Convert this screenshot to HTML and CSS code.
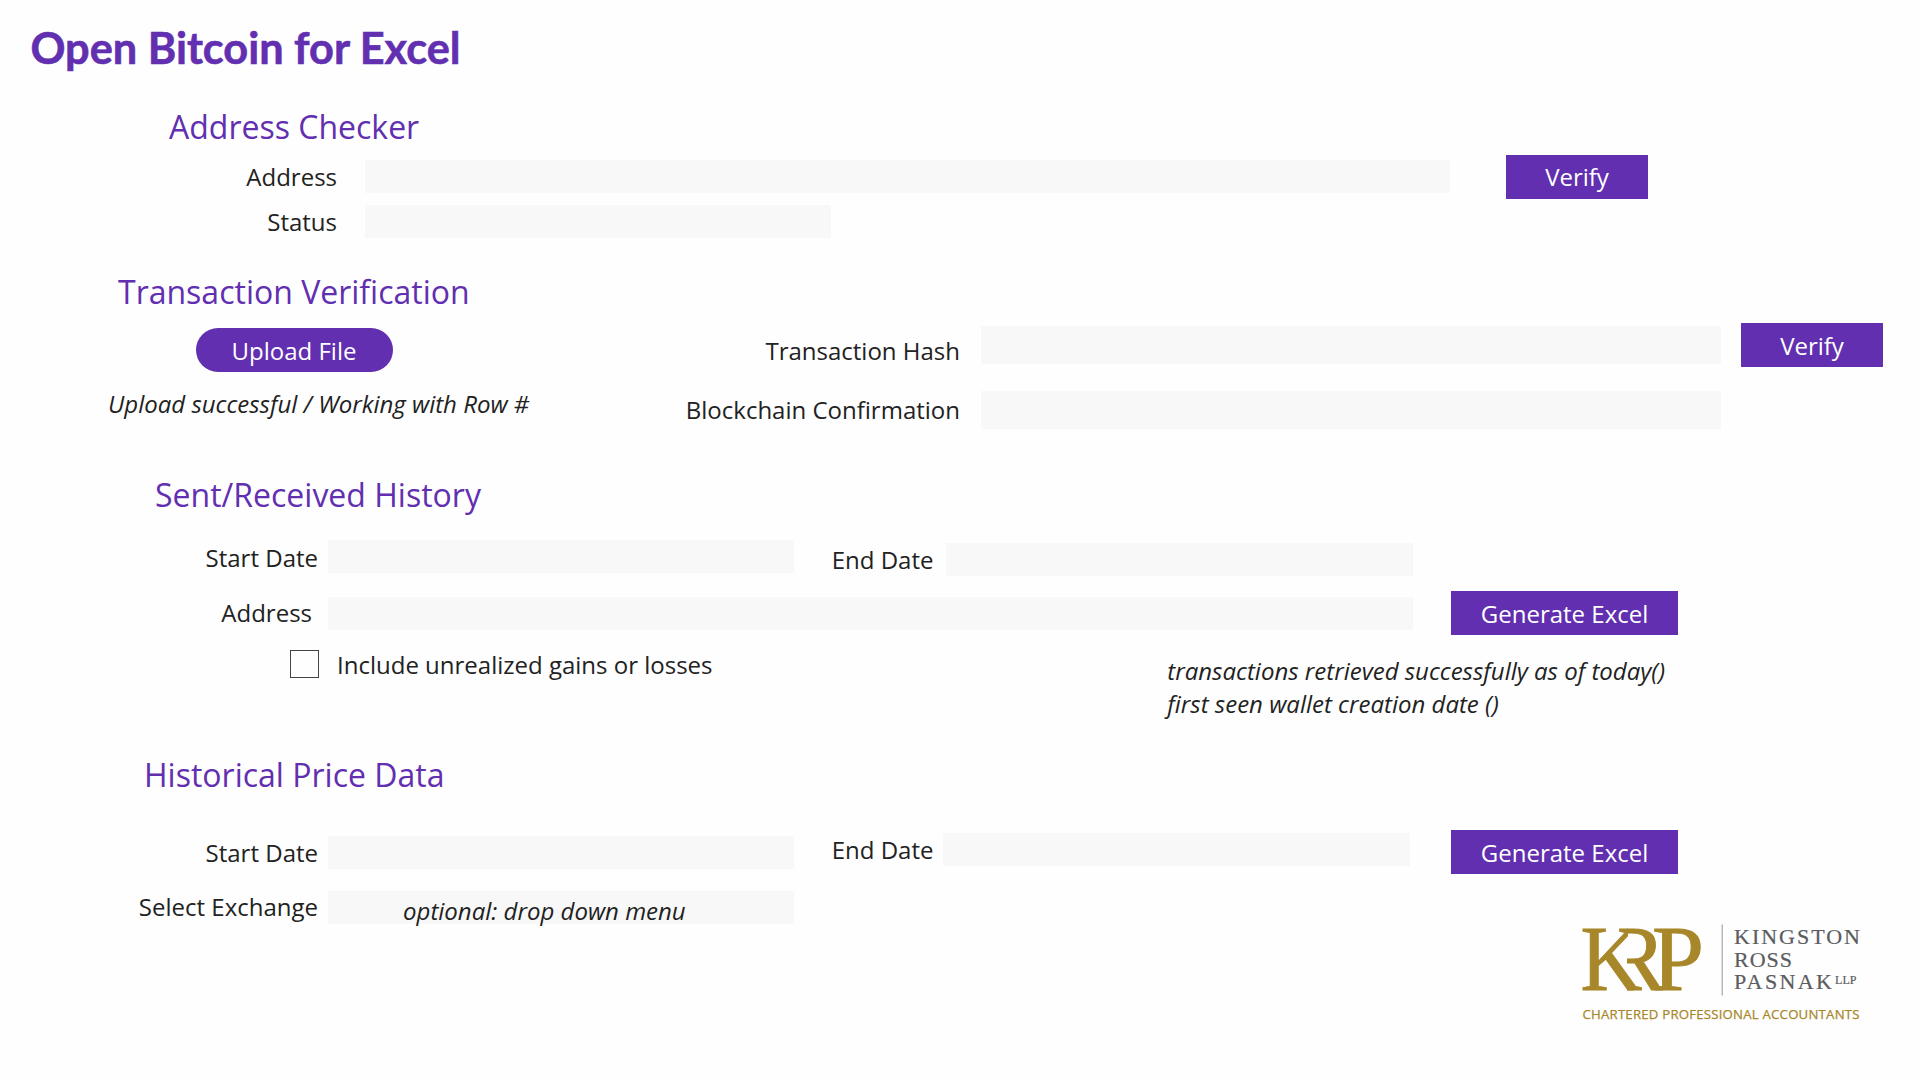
FILE: index.html
```html
<!DOCTYPE html>
<html lang="en">
<head>
<meta charset="utf-8">
<title>Open Bitcoin for Excel</title>
<link rel="stylesheet" href="styles.css">
</head>
<body>
<main class="page">
  <h1 class="title">Open Bitcoin for Excel</h1>

  <section class="section checker">
    <h2 class="heading">Address Checker</h2>
    <div class="checker-body">
      <div class="checker-fields">
        <div class="row"><span class="label">Address</span><div class="field long"></div></div>
        <div class="row"><span class="label">Status</span><div class="field short"></div></div>
      </div>
      <button class="button small">Verify</button>
    </div>
  </section>

  <section class="section verification">
    <h2 class="heading">Transaction Verification</h2>
    <div class="verification-body">
      <div class="upload">
        <button class="button pill">Upload File</button>
        <p class="note">Upload successful / Working with Row #</p>
      </div>
      <div class="hash-fields">
        <div class="row"><span class="label">Transaction Hash</span><div class="field tall"></div></div>
        <div class="row"><span class="label">Blockchain Confirmation</span><div class="field tall"></div></div>
      </div>
      <button class="button small">Verify</button>
    </div>
  </section>

  <section class="section history">
    <h2 class="heading">Sent/Received History</h2>
    <div class="row dates">
      <span class="label start">Start Date</span><div class="field short"></div>
      <span class="label end">End Date</span><div class="field end-field"></div>
    </div>
    <div class="row address">
      <span class="label start">Address</span><div class="field long"></div>
      <button class="button large">Generate Excel</button>
    </div>
    <div class="row options">
      <label class="check"><span class="box"></span><span class="check-text">Include unrealized gains or losses</span></label>
      <p class="note result">transactions retrieved successfully as of today()<br>first seen wallet creation date ()</p>
    </div>
  </section>

  <section class="section prices">
    <h2 class="heading">Historical Price Data</h2>
    <div class="row dates">
      <span class="label start">Start Date</span><div class="field short"></div>
      <span class="label end">End Date</span><div class="field end-field"></div>
      <button class="button large">Generate Excel</button>
    </div>
    <div class="row exchange">
      <span class="label start">Select Exchange</span><div class="field short"><span class="note">optional: drop down menu</span></div>
    </div>
  </section>

  <footer class="footer">
    <svg class="logo" width="300" height="110" viewBox="1570 915 300 110">
      <defs>
        <clipPath id="r-clip"><path d="M1627 920H1663V992H1627Z"/></clipPath>
        <clipPath id="k-clip"><path d="M1575 920H1628V950H1650V995H1575Z"/></clipPath>
      </defs>
      <g class="mark">
        <text x="1580.5" y="989.5" textLength="62" lengthAdjust="spacingAndGlyphs" clip-path="url(#k-clip)">K</text>
        <text x="1605" y="989.5" textLength="61" lengthAdjust="spacingAndGlyphs" clip-path="url(#r-clip)">R</text>
        <text x="1652" y="989.5" textLength="52" lengthAdjust="spacingAndGlyphs">P</text>
      </g>
      <path class="divider" d="M1722.2 924.5V995.5"/>
      <g class="name">
        <text x="1734" y="944" textLength="126">KINGSTON</text>
        <text x="1734" y="966.5" textLength="58">ROSS</text>
        <text x="1734" y="989" textLength="98">PASNAK</text>
        <text class="llp" x="1835" y="984" textLength="21.5">LLP</text>
      </g>
      <text class="tagline" x="1582.5" y="1019" textLength="277">CHARTERED PROFESSIONAL ACCOUNTANTS</text>
    </svg>
  </footer>
</main>
</body>
</html>
```
FILE: styles.css
```css
* { box-sizing: border-box; }

body {
  margin: 0;
  background: #fefefe;
  color: #222;
  font: 24px/32px "Open Sans", sans-serif;
}

h1, h2, p { margin: 0; font-weight: 400; }

.page {
  display: flex;
  flex-direction: column;
  width: 1920px;
  height: 1080px;
  overflow: hidden;
}

.title {
  height: 104px;
  padding: 22px 0 0 30.5px;
  color: #612fb0;
  font: 700 43.3px/50px Lato, sans-serif;
  -webkit-text-stroke: .6px #612fb0;
}

.section { display: flex; flex-direction: column; flex: none; }

.heading {
  height: 44px;
  color: #612fb0;
  font-size: 32px;
  line-height: 44px;
  white-space: nowrap;
}

.row { display: flex; align-items: flex-start; }
.label { white-space: nowrap; text-align: right; flex: none; }

.field { flex: none; width: 467px; height: 33px; background: #f8f8f8; }
.field.short { width: 466px; }
.field.long { width: 1085px; }
.field.tall { width: 740px; height: 38px; }

.button {
  flex: none;
  height: 44px;
  padding: 0;
  border: 0;
  background: #612fb0;
  color: #fff;
  font: 24px/44px "Open Sans", sans-serif;
}
.button.small { width: 142px; }
.button.large { width: 227px; padding-top: 1px; }
.button.pill { width: 197px; padding-top: 1px; border-radius: 22px; }

.note { font-style: italic; white-space: nowrap; }

/* Address checker */
.checker { height: 166px; }
.checker .heading { padding: 1px 0 0 169px; }
.checker-body { display: flex; align-items: flex-start; gap: 56px; padding-top: 7px; }
.checker-fields { display: flex; flex-direction: column; gap: 12px; padding-top: 5px; }
.checker .row { gap: 28px; }
.checker .label { width: 337px; padding-top: 1px; }

/* Transaction verification */
.verification { height: 202px; }
.verification .heading { padding-left: 118px; }
.verification-body { display: flex; align-items: flex-start; padding-top: 9px; }
.verification .small { padding-top: 1px; }
.upload { width: 636px; padding: 5px 0 0 108px; }
.upload .pill { margin-left: 87.5px; }
.upload .note { margin-top: 16px; }
.hash-fields { display: flex; flex-direction: column; gap: 27px; width: 1105px; padding-top: 3px; }
.hash-fields .row { gap: 21px; }
.hash-fields .label { width: 324px; padding-top: 9px; height: 38px; }
.hash-fields .row + .row .label { padding-top: 3px; }

/* Sent and received history */
.history { height: 280px; }
.history .heading { height: 68px; padding: 1px 0 0 155px; }
.label.start { width: 318px; margin-right: 10px; }
.label.end { width: 102px; margin-left: 37.5px; }
.history .dates { height: 57px; }
.history .dates .start { padding-top: 2px; }
.history .dates .end { padding-top: 4px; }
.history .end-field { margin: 3px 0 0 12.5px; }
.history .address { height: 53px; }
.history .address .start { width: 312px; margin-right: 16px; }
.history .address .button { margin: -6px 0 0 38px; }
.options { justify-content: space-between; padding: 0 255px 0 290px; }
.check { display: flex; align-items: flex-start; }
.box { width: 29px; height: 28px; border: 1px solid #444; }
.check-text { margin: -1px 0 0 18px; white-space: nowrap; }
.result { margin-top: 4px; line-height: 33px; }

/* Historical prices */
.prices .heading { height: 78px; padding: 1px 0 0 144px; }
.prices .dates { height: 61px; }
.prices .dates .start { padding-top: 7px; }
.prices .dates .end { padding-top: 4px; }
.prices .dates .field { margin-top: 6px; }
.prices .dates .end-field { margin: 3px 0 0 9.5px; }
.prices .button { margin-left: 41px; }
.exchange .field { padding-left: 75px; }
.exchange .field .note { display: block; padding-top: 4px; }

/* Company logo */
.footer { display: flex; justify-content: flex-end; margin-top: -9px; padding-right: 50px; }
.logo { display: block; }
.mark { fill: #a78729; stroke: #a78729; stroke-width: .9; font: 93px "Liberation Serif", serif; }
.divider { stroke: #a8a8aa; stroke-width: 1.2; }
.name { fill: #5b5c60; stroke: #5b5c60; stroke-width: .2; font: 22px "Liberation Serif", serif; }
.name .llp { font-size: 12px; }
.tagline { fill: #a78729; stroke: #a78729; stroke-width: .25; font: 500 13.2px "Open Sans", sans-serif; }
```
